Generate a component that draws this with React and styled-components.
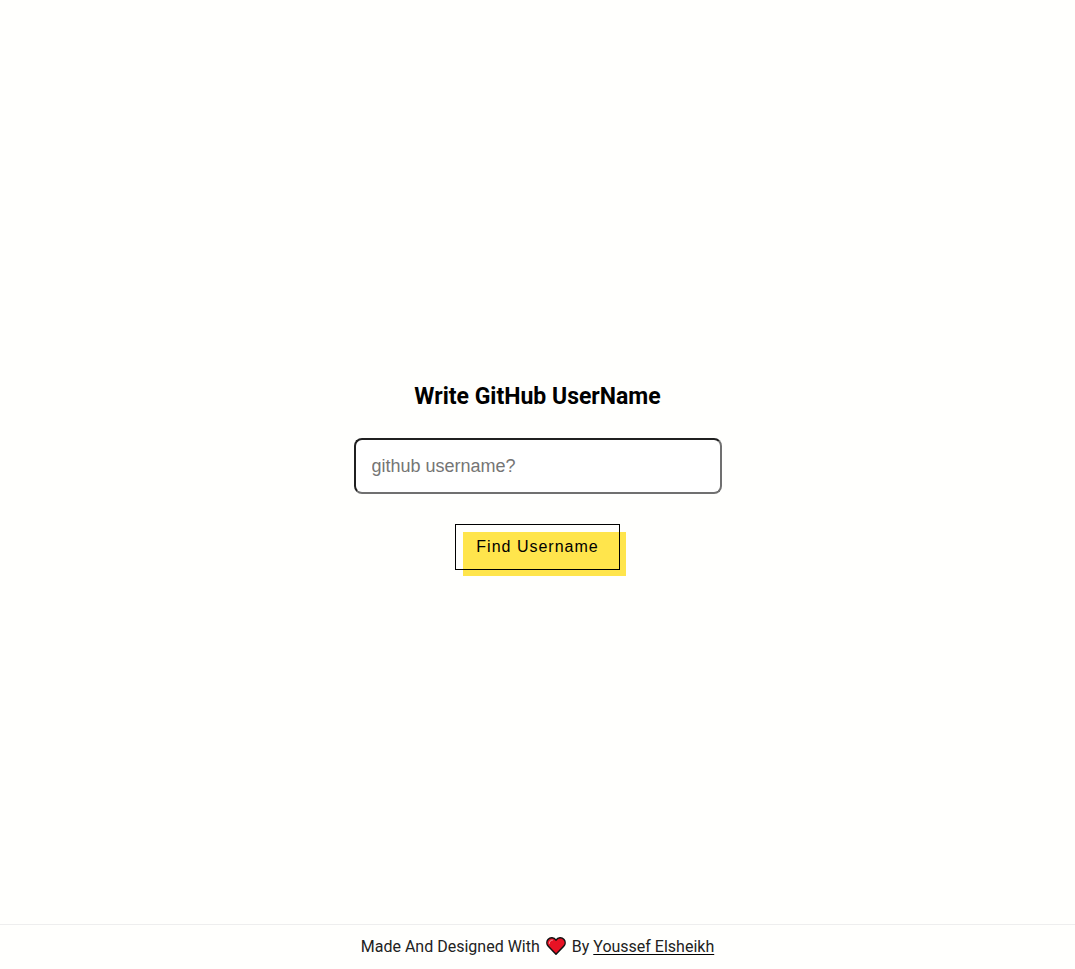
import React, { useState } from "react";
import styled, { createGlobalStyle } from "styled-components";

const GlobalStyle = createGlobalStyle`
  * {
    box-sizing: border-box;
  }

  body {
    margin: 0;
    background: #fffffd;
    color: #000;
    font-family: Roboto, sans-serif;
  }
`;

const Page = styled.div`
  min-height: 100vh;
  display: flex;
  flex-direction: column;
`;

const Main = styled.main`
  flex: 1;
  display: flex;
  justify-content: center;
  align-items: center;
  padding: 0 16px;
`;

const SearchForm = styled.form`
  isolation: isolate;
  display: flex;
  flex-direction: column;
  align-items: center;
  width: 100%;
  max-width: 368px;
`;

const Title = styled.label`
  margin: 20px 0 18px;
  font-size: 23px;
  font-weight: 700;
  line-height: 46px;
`;

const UsernameInput = styled.input`
  width: 100%;
  height: 56px;
  padding: 0 16px;
  border: 2px solid;
  border-color: #202020 #707070 #707070 #202020;
  border-radius: 8px;
  background: #fff;
  font-family: "Liberation Sans", Arial, sans-serif;
  font-size: 18px;

  &::placeholder {
    color: #757575;
  }
`;

const FindButton = styled.button`
  position: relative;
  height: 46px;
  margin-top: 30px;
  padding: 0 20px;
  border: 1px solid #000;
  background: transparent;
  color: #000;
  font-family: "Liberation Sans", Arial, sans-serif;
  font-size: 16px;
  letter-spacing: 1px;
  cursor: pointer;

  &::before {
    content: "";
    position: absolute;
    z-index: -1;
    top: 7px;
    left: 7px;
    width: 100%;
    height: 100%;
    background: #ffe54c;
  }
`;

const Footer = styled.footer`
  display: flex;
  justify-content: center;
  align-items: center;
  gap: 6px;
  height: 45px;
  padding-bottom: 2px;
  border-top: 1px solid #eee;
  color: #222;
  font-size: 16px;
`;

const AuthorLink = styled.a`
  color: inherit;
  text-decoration-color: #000;
  text-underline-offset: 2px;
`;

function Heart() {
  return (
    <svg width="20" height="20" viewBox="0 0 20 20" role="img" aria-label="love">
      <path
        d="M10 18.2 2.3 10.3C.5 8.4.4 5.4 2 3.6 4.2 1.1 8 1.3 10 4.1c2-2.8 5.8-3 8-.5 1.6 1.8 1.5 4.8-.3 6.7Z"
        fill="#e81224"
        stroke="#111"
        strokeWidth="1.5"
        strokeLinejoin="round"
      />
      <path
        d="M3.3 7.4c0-2 1.3-3.3 3.1-3.3"
        fill="none"
        stroke="#f8a0a8"
        strokeWidth="1"
        strokeLinecap="round"
      />
    </svg>
  );
}

export default function App() {
  const [username, setUsername] = useState("");

  return (
    <>
      <GlobalStyle />
      <Page>
        <Main>
          <SearchForm onSubmit={(event) => event.preventDefault()}>
            <Title htmlFor="username">Write GitHub UserName</Title>
            <UsernameInput
              id="username"
              type="text"
              placeholder="github username?"
              value={username}
              onChange={(event) => setUsername(event.target.value)}
            />
            <FindButton type="submit">Find Username</FindButton>
          </SearchForm>
        </Main>
        <Footer>
          <span>Made And Designed With</span>
          <Heart />
          <span>
            By <AuthorLink href="#author">Youssef Elsheikh</AuthorLink>
          </span>
        </Footer>
      </Page>
    </>
  );
}
